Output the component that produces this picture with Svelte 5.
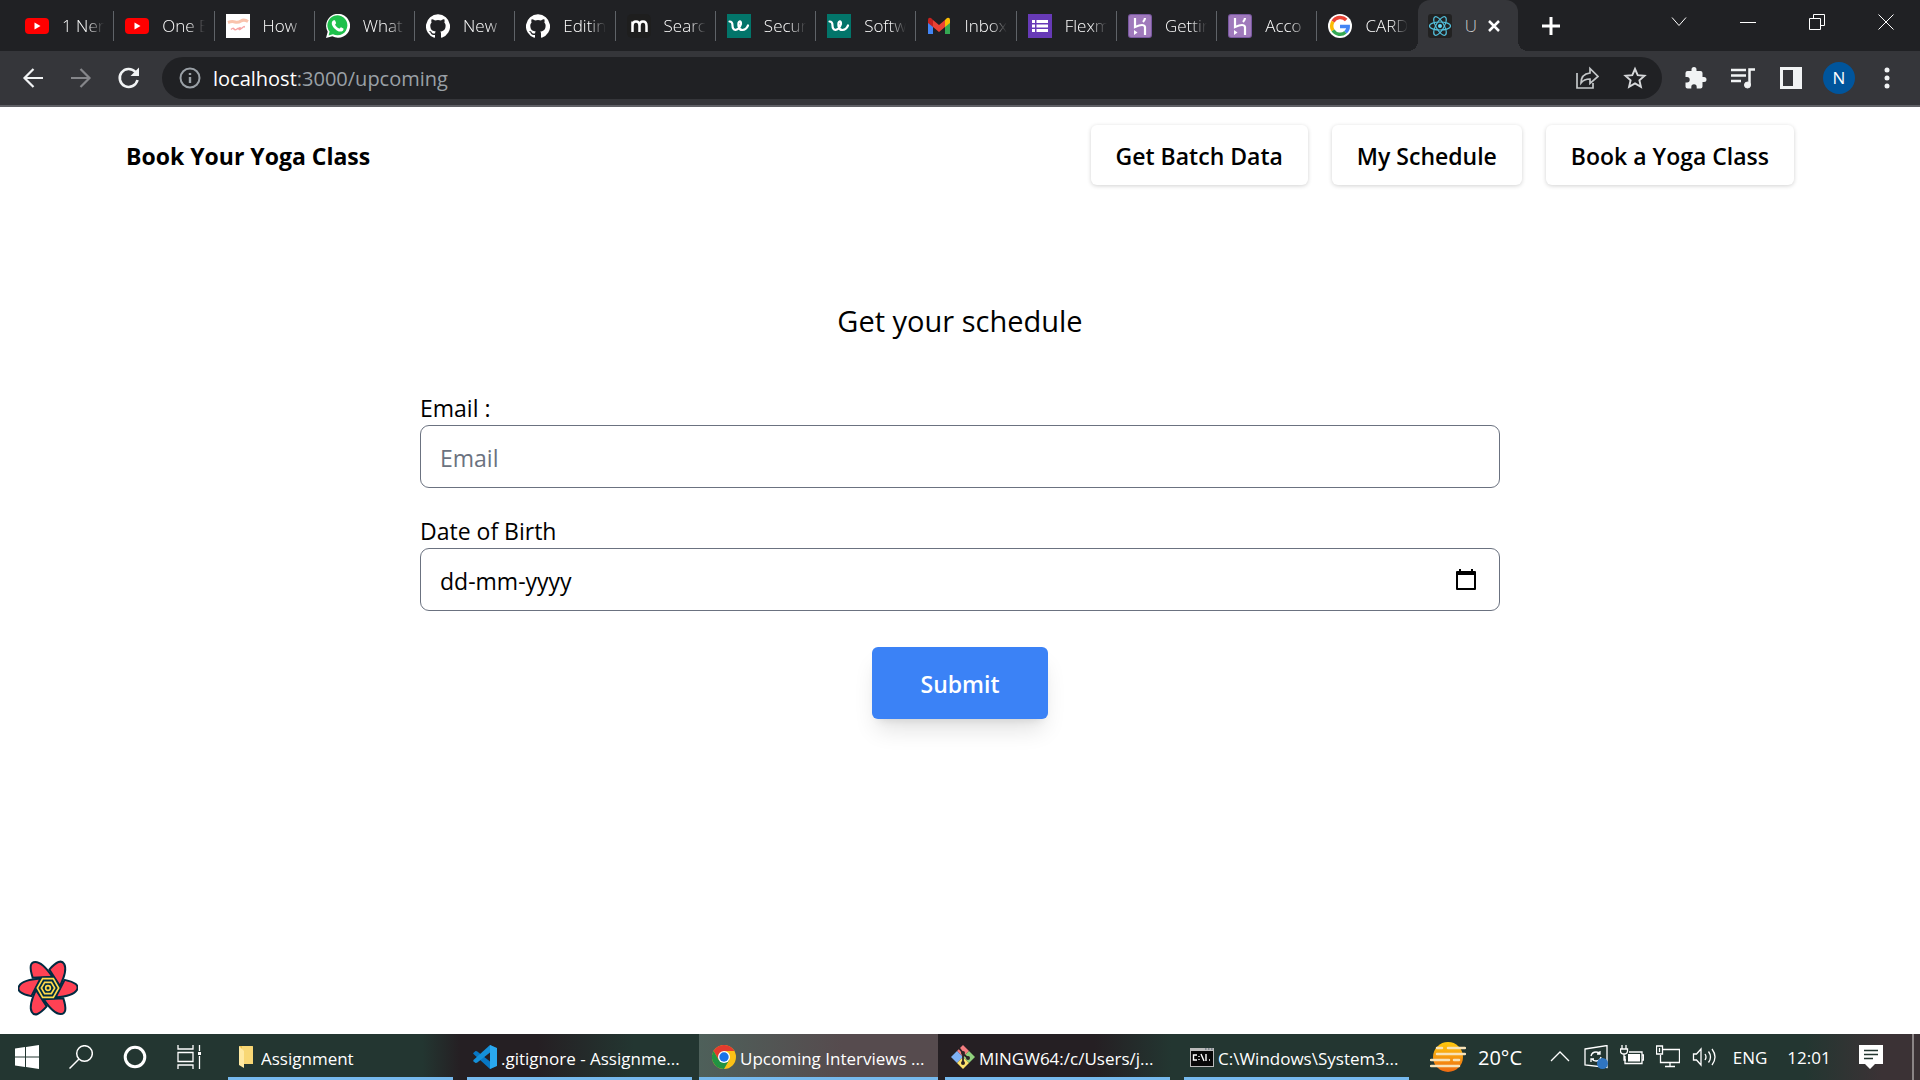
<script>
  const tabs = [
    { icon: 'youtube', title: '1 Ner' },
    { icon: 'youtube', title: 'One E' },
    { icon: 'school', title: 'How' },
    { icon: 'whatsapp', title: 'What' },
    { icon: 'github', title: 'New' },
    { icon: 'github', title: 'Editin' },
    { icon: 'm', title: 'Searc' },
    { icon: 'w', title: 'Secur' },
    { icon: 'w', title: 'Softw' },
    { icon: 'gmail', title: 'Inbox' },
    { icon: 'forms', title: 'Flexm' },
    { icon: 'heroku', title: 'Gettin' },
    { icon: 'heroku', title: 'Acco' },
    { icon: 'google', title: 'CARD' },
    { icon: 'react', title: 'U', active: true },
  ];
  const links = ['Get Batch Data', 'My Schedule', 'Book a Yoga Class'];
  const tasks = [
    { icon: 'folder', title: 'Assignment' },
    { icon: 'vscode', title: '.gitignore - Assignme...' },
    { icon: 'chrome', title: 'Upcoming Interviews ...', active: true },
    { icon: 'git', title: 'MINGW64:/c/Users/j...' },
    { icon: 'cmd', title: 'C:\\Windows\\System3...' },
  ];
  const petals = [0, 60, 120, 180, 240, 300];
  let email = $state('');
  let birth = $state('');
</script>

{#snippet icon(name)}
  <svg class="icon" viewBox="0 0 24 24" aria-hidden="true">
    {#if name === 'youtube'}
      <rect y="4" width="24" height="16" rx="4" fill="#f00" /><path d="M9.500 8.500v7l6-3.500z" fill="#fff" />
    {:else if name === 'school'}
      <path d="M0 0h24v24H0z" fill="#fff" />
      <path d="M2 8.500q4-1.500 7-.5t6-1 7 .5" fill="none" stroke="#f9c3ad" stroke-width="3" />
      <path d="M5 15.500q2-2 3-.5t3 0 2 0 3-1 2-.5M14 13v3" fill="none" stroke="#f7a3a3" stroke-width="1.500" />
    {:else if name === 'whatsapp'}
      <path d="M0 24l1.700-6.200A12 12 0 1 1 6.300 22.300z" fill="#fff" />
      <path d="M2.600 21.400l1-3.800A10 10 0 1 1 7 20.300z" fill="#1fc04c" />
      <path d="M8.200 6.200c.6 0 .8 0 1 .6l.9 2.200c.1.400-.9 1.300-1 1.700.9 1.800 2.300 3.100 4.300 3.900.5 0 1.100-1.500 1.600-1.400l2.400 1.200c.3.300 0 1.900-.8 2.500-1.500 1.100-3.300.9-5.800-.5-2-1.200-3.500-2.900-4.500-4.800-.9-2-.7-4 .8-5.200z" fill="#fff" />
    {:else if name === 'github'}
      <path fill="#fff" d="M12 .3a12 12 0 0 0-3.800 23.400c.6.100.8-.3.800-.6v-2.200c-3.300.7-4-1.400-4-1.400-.6-1.400-1.400-1.800-1.400-1.800-1-.7.1-.7.100-.7 1.200 0 1.900 1.200 1.900 1.200 1 1.800 2.800 1.300 3.500 1 0-.8.400-1.300.7-1.600-2.700-.3-5.500-1.300-5.500-6 0-1.200.5-2.300 1.300-3.100-.2-.4-.6-1.600 0-3.200 0 0 1-.3 3.400 1.200a11.500 11.500 0 0 1 6 0c2.300-1.500 3.300-1.200 3.300-1.200.6 1.600.2 2.800 0 3.200.9.800 1.300 1.900 1.300 3.200 0 4.600-2.800 5.600-5.500 5.900.5.400.9 1 .9 2.200v3.300c0 .3.100.7.800.6A12 12 0 0 0 12 .3" />
    {:else if name === 'm'}
      <rect width="24" height="24" rx="5" fill="#1e1e1e" />
      <path d="M5.500 18V7.500M5.500 12Q5.500 7.500 9 7.500T12.500 12V18M12.500 12Q12.500 7.500 16 7.500T19.500 12V18" fill="none" stroke="#fff" stroke-width="2.500" />
    {:else if name === 'w'}
      <path d="M0 0h24v24H0z" fill="#02756a" />
      <path d="M2.500 7.500q3 0 3 4t3 4.500q4-1 5.500-6 0-3-1.500-2.500t-1 4.500 4 4 5.500-4.500" fill="none" stroke="#fff" stroke-width="2.200" stroke-linecap="round" />
    {:else if name === 'gmail'}
      <path d="M1 7v13h5V11z" fill="#4285f4" /><path d="M23 7v13h-5V11z" fill="#34a853" />
      <path d="M18 6l2-2q3-1 3 2v3l-5 4z" fill="#fbbc04" /><path d="M1 6q0-3 3-2l2 2v7L1 9z" fill="#c5221f" /><path d="M6 6l6 5 6-5v7l-6 5-6-5z" fill="#ea4335" />
    {:else if name === 'forms'}
      <path d="M0 0h24v24H0z" fill="#673ab7" />
      <path d="M4 6h3v3H4zM8.500 6H20v3H8.500zM4 10.500h3v3H4zM8.500 10.500H20v3H8.500zM4 15h3v3H4zM8.500 15H20v3H8.500z" fill="#fff" />
    {:else if name === 'heroku'}
      <rect width="24" height="24" rx="3" fill="#79589f" /><rect x="1" y="1" width="22" height="22" rx="2" fill="#a07abc" />
      <path d="M7 4v9q9-4 10 0v8M17 4q0 2-2 4" fill="none" stroke="#fff" stroke-width="2.200" /><path d="M6 16l3.500 2.500L6 21z" fill="#fff" />
    {:else if name === 'google'}
      <circle cx="12" cy="12" r="12" fill="#fff" />
      <g fill="none" stroke-width="3.500"><path d="M18.200 6A8.300 8.300 0 0 0 5 7.600" stroke="#ea4335" /><path d="M5 7.600a8.300 8.300 0 0 0 0 8.800" stroke="#fbbc05" /><path d="M5 16.400a8.300 8.300 0 0 0 12.500 1.800" stroke="#34a853" /><path d="M17.500 18.200q2.800-2.500 2.700-5.700H12" stroke="#4285f4" /></g>
    {:else if name === 'react'}
      <rect width="24" height="24" rx="3" fill="#222" />
      <g fill="none" stroke="#53c1de" stroke-width="1.200" transform="rotate(0 12 12)"><ellipse cx="12" cy="12" rx="10.500" ry="4" /><ellipse cx="12" cy="12" rx="10.500" ry="4" transform="rotate(60 12 12)" /><ellipse cx="12" cy="12" rx="10.500" ry="4" transform="rotate(120 12 12)" /></g>
      <circle cx="12" cy="12" r="2" fill="#61dafb" />
    {:else if name === 'folder'}
      <path d="M5 1h13q1 0 1 1v17h-3V8H7z" fill="#f0c24b" /><path d="M8 1h10q1 0 1 1v17H8z" fill="#f8d775" /><path d="M5 1l5 5v17l-5-3z" fill="#ffe9a2" />
    {:else if name === 'vscode'}
      <path d="M17 0l6 3v18l-6 3L1 9.500 0 8.300 2.500 6 4 6.200 17 16.500z" fill="#0877c4" />
      <path d="M17 0l-16 14.500L0 16l2.500 2 1.500-.2L17 7.500z" fill="#1590d8" /><path d="M17 0l7 3v18l-7 3z" fill="#2aa8ef" />
    {:else if name === 'chrome'}
      <circle cx="12" cy="12" r="12" fill="#fbc116" />
      <path d="M1.600 6A12 12 0 0 1 22.400 6H12L6.800 15z" fill="#e33b2e" /><path d="M1.600 6A12 12 0 0 0 12 24l5.200-9H6.800z" fill="#229342" />
      <circle cx="12" cy="12" r="6" fill="#fff" /><circle cx="12" cy="12" r="4.700" fill="#1a73e8" />
    {:else if name === 'git'}
      <path d="M12 0l6 6-6 6-6-6z" fill="#f47d80" /><path d="M6 6l6 6-6 6-6-6z" fill="#7fb1f5" /><path d="M18 6l6 6-6 6-6-6z" fill="#90d07d" /><path d="M12 12l6 6-6 6-6-6z" fill="#fde26b" />
      <path d="M8 3l4 5v11M12 9l5 4" stroke="#2c2325" stroke-width="1.800" fill="none" /><circle cx="12" cy="8" r="2" fill="#2c2325" /><circle cx="17" cy="13" r="2" fill="#2c2325" /><circle cx="12" cy="18" r="2" fill="#2c2325" />
    {:else if name === 'cmd'}
      <path d="M0 3h24v19H0z" fill="#bbb" /><path d="M1 6h22v15H1z" fill="#080808" /><path d="M15 4h1.500M18 4h1.500M21 4h1.500" stroke="#456" />
      <path d="M7 10H3.500v5H7M9 11v1M9 14v1M11 9l3 7M16 9v7M19 15h1" fill="none" stroke="#fff" stroke-width="1.400" />
    {/if}
  </svg>
{/snippet}

<div class="screen">
  <div class="tabbar">
    <div class="tabs" role="tablist">
      {#each tabs as tab}
        <div class="tab" class:active={tab.active} role="tab" aria-selected={!!tab.active} tabindex="0">
          {@render icon(tab.icon)}
          <span class="title">{tab.title}</span>
          {#if tab.active}
            <button class="close" aria-label="Close tab"><svg viewBox="0 0 14 14" width="14" height="14"><path d="M2 2l10 10M12 2L2 12" stroke="#fff" stroke-width="2.500" /></svg></button>
          {/if}
        </div>
      {/each}
    </div>
    <button class="new" aria-label="New tab"><svg viewBox="0 0 18 18" width="18" height="18"><path d="M9 0v18M0 9h18" stroke="#fff" stroke-width="3" /></svg></button>
    <div class="controls">
      <button aria-label="Search tabs"><svg viewBox="0 0 16 16"><path d="M1 3.500l7 8 7-8" /></svg></button>
      <button aria-label="Minimize"><svg viewBox="0 0 16 16"><path d="M0 8.500h16" /></svg></button>
      <button aria-label="Restore"><svg viewBox="0 0 16 16"><path d="M.5 4.500h11v11H.5zM4.500 4V.5h11v11H12" /></svg></button>
      <button aria-label="Close"><svg viewBox="0 0 16 16"><path d="M.5.5l15 15M15.500.5l-15 15" /></svg></button>
    </div>
  </div>

  <div class="toolbar">
    <button class="tool" aria-label="Back"><svg viewBox="0 0 24 24" fill="none" stroke="#f1f3f4" stroke-width="2.200"><path d="M22 12H4M12.500 3L3.500 12l9 9" /></svg></button>
    <button class="tool" aria-label="Forward"><svg viewBox="0 0 24 24" fill="none" stroke="#85868a" stroke-width="2.200"><path d="M2 12h18M11.500 3l9 9-9 9" /></svg></button>
    <button class="tool" aria-label="Reload"><svg viewBox="0 0 24 24" fill="none" stroke="#f1f3f4" stroke-width="2.600"><path d="M20.500 14A9 9 0 1 1 18.500 6" /><path d="M22 1.500V10h-8.500z" fill="#f1f3f4" stroke="none" /></svg></button>
    <div class="omnibox">
      <svg class="info" viewBox="0 0 22 22" fill="none" stroke="#9aa0a6" stroke-width="2"><circle cx="11" cy="11" r="9.500" /><path d="M11 10v6M11 6v2" stroke-width="2.400" /></svg>
      <div class="url">localhost<span>:3000/upcoming</span></div>
      <button class="tool" aria-label="Share"><svg viewBox="0 0 24 24" fill="none" stroke="#c4c7c9" stroke-width="1.700"><path d="M2 7v15h16v-5" /><path d="M6 17Q6 8 15 7V2.500l8 8-8 7V13q-6 0-9 4z" /></svg></button>
      <button class="tool" aria-label="Bookmark"><svg viewBox="0 0 24 24" fill="none" stroke="#d6d8da" stroke-width="1.900"><path d="M12 3l2.700 6.200 6.800.6-5.100 4.500 1.500 6.600-5.900-3.500-5.900 3.500 1.500-6.600-5.100-4.500 6.800-.6z" /></svg></button>
    </div>
    <button class="tool" aria-label="Extensions"><svg viewBox="0 0 24 24" fill="#f1f3f4"><path d="M21 11h-1.500V7q0-2-2-2h-4V3.500a2.500 2.500 0 0 0-5 0V5h-4q-2 0-2 2v4H4a2.700 2.700 0 0 1 0 5.400H2.500V20.500q0 2 2 2h3.800V21a2.700 2.700 0 0 1 5.400 0v1.500h3.800q2 0 2-2v-4.500H21a2.500 2.500 0 0 0 0-5z" /></svg></button>
    <button class="tool" aria-label="Media"><svg viewBox="0 0 24 24" fill="none" stroke="#f1f3f4" stroke-width="2.500"><path d="M0 4h15M0 9.500h15M0 15h10M18.500 19V3.500H24" /><circle cx="16.500" cy="19" r="3" fill="#f1f3f4" stroke-width="1" /></svg></button>
    <button class="tool" aria-label="Side panel"><svg viewBox="0 0 24 24" fill="#f1f3f4"><path fill-rule="evenodd" d="M1 1h22v22H1zM4 4v16h10V4z" /></svg></button>
    <button class="tool" aria-label="Profile"><span class="avatar">N</span></button>
    <button class="tool" aria-label="Menu"><svg viewBox="0 0 24 24" fill="#f1f3f4"><circle cx="12" cy="4" r="2.500" /><circle cx="12" cy="12" r="2.500" /><circle cx="12" cy="20" r="2.500" /></svg></button>
  </div>

  <div class="page">
    <header>
      <strong>Book Your Yoga Class</strong>
      <nav>
        {#each links as link}<a href="#{link.toLowerCase().replaceAll(' ', '-')}">{link}</a>{/each}
      </nav>
    </header>
    <main>
      <h1>Get your schedule</h1>
      <form onsubmit={(e) => e.preventDefault()}>
        <label for="email">Email :</label>
        <div class="field"><input id="email" type="email" placeholder="Email" bind:value={email} /></div>
        <label for="birth">Date of Birth</label>
        <div class="field">
          <input id="birth" class="date" type="text" placeholder="dd-mm-yyyy" bind:value={birth} />
          <button class="calendar" type="button" aria-label="Open calendar"><svg viewBox="0 0 20 22" width="20" height="22"><path fill-rule="evenodd" d="M3 0h2v2h10V0h2v2h2q1 0 1 1v17q0 1-1 1H1q-1 0-1-1V3q0-1 1-1h2zM2 6v13h16V6z" /></svg></button>
        </div>
        <button class="submit">Submit</button>
      </form>
    </main>
    <button class="devtools" aria-label="Open query devtools">
      <svg viewBox="-90 -90 180 180" width="60" height="60">
        <g fill="#ff4154" stroke="#002b41" stroke-width="6" stroke-linejoin="round">
          {#each petals as angle}<path transform="rotate({angle})" d="M-46-31C-56-62-54-78-38-78C-20-78-2-56 13-34z" />{/each}
        </g>
        <path d="M-19-34h38L39 0 19 34h-38L-39 0z" fill="#002b41" />
        <g fill="none" stroke="#ffd94c" stroke-width="5"><path d="M-16-28h32L32 0 16 28h-32L-32 0z" /><path d="M-10-17h20L20 0 10 17h-20L-20 0z" /></g>
        <circle r="7" fill="none" stroke="#ffd94c" stroke-width="5" />
      </svg>
    </button>
  </div>

  <footer class="taskbar">
    <button class="start" aria-label="Start"><svg viewBox="0 0 24 24" fill="#fff"><path d="M0 3.500l10-1.400v9.400H0zM11 2l13-2v11.500H11zM0 12.500h10v9.400L0 20.500zM11 12.500h13V24l-13-2z" /></svg></button>
    <button class="start" aria-label="Search"><svg viewBox="0 0 24 24" fill="none" stroke="#fff" stroke-width="1.500"><circle cx="15.500" cy="8.500" r="7.800" /><path d="M10 14L.5 23.500" /></svg></button>
    <button class="start" aria-label="Cortana"><svg viewBox="0 0 24 24" fill="none" stroke="#fff" stroke-width="3"><circle cx="12" cy="12" r="9.800" /></svg></button>
    <button class="start" aria-label="Task view"><svg viewBox="0 0 24 24" fill="none" stroke="#fff" stroke-width="1.300"><path d="M1 0v4h15V0M1 7.500h15v9H1zM1 24v-4h15v4M22.500 0v6M22.500 11v13" /><path d="M21 7h3v3h-3z" fill="#fff" stroke="none" /></svg></button>
    <div class="tasks">
      {#each tasks as task}
        <button class="task" class:active={task.active}>{@render icon(task.icon)}<span>{task.title}</span></button>
      {/each}
    </div>
    <div class="weather">
      <svg viewBox="0 0 36 30" width="36" height="30"><defs><linearGradient id="sun" x1="0" y1="0" x2="0" y2="1"><stop stop-color="#ffc90e" /><stop offset="1" stop-color="#ee6a12" /></linearGradient></defs><circle cx="18" cy="15" r="15" fill="url(#sun)" /><path d="M7 6h5M18 6h17M7 12h28M1 18h18M24 18h5M1 24h28" stroke="#f8e3b8" stroke-width="2.500" stroke-linecap="round" /></svg>
      20°C
    </div>
    <div class="tray">
      <button aria-label="Hidden icons"><svg viewBox="0 0 24 24"><path d="M3 16l9-9 9 9" /></svg></button>
      <button aria-label="Updates"><svg viewBox="0 0 24 24"><path d="M1 4l22-3.500v22L1 20z" /><path d="M7 11q1-4 5-4 3 0 4 2M16 6v3h-3M17 12q-1 4-5 4-3 0-4-2M7 17v-3h3" /><circle cx="18.500" cy="18.500" r="5.500" fill="#2f75c0" stroke="none" /></svg></button>
      <button aria-label="Battery"><svg viewBox="0 0 24 24"><path d="M5 11v7.500h17V7H9M22 10h1.500v5H22M2 0v4M6 0v4M.5 4h7v2q0 3-3.500 3T.5 6zM4 9v6h2" /><path d="M8 9h12v7.500H8z" fill="#fff" stroke="none" /></svg></button>
      <button aria-label="Network"><svg viewBox="0 0 24 24"><path d="M7 4.500h16.500v13H4.500V10M.5 1h6v8h-6zM3.500 3v4M14 17.500v4M9 21.500h10" /></svg></button>
      <button aria-label="Volume"><svg viewBox="0 0 24 24"><path d="M1.500 9h3L9 4v16l-4.500-5h-3zM13 9q2 3 0 6M16.500 6.500q4 5.500 0 11M20 4q6 8 0 16" /></svg></button>
    </div>
    <button class="lang">ENG</button>
    <button class="clock">12:01</button>
    <button class="clock" aria-label="Notifications"><svg viewBox="0 0 24 24"><path d="M0 0h24v19h-8l-5 5-5-5H0z" fill="#fff" /><path d="M5 5.500h14M5 9.500h14M5 13.500h9" stroke="#22352f" stroke-width="1.300" /></svg></button>
    <div class="desktop"></div>
  </footer>
</div>

<style>
  :global(body) { margin: 0; }
  .screen { display: flex; flex-direction: column; min-height: 100vh; font-family: "Open Sans", "Noto Sans", sans-serif; background: #fff; color: #000; }
  button { border: 0; padding: 0; margin: 0; background: none; color: inherit; font: inherit; display: flex; align-items: center; justify-content: center; }
  svg { display: block; flex: none; }
  .icon { width: 24px; height: 24px; }

  .tabbar { display: flex; height: 51px; padding-left: 14px; background: #202124; color: #fff; }
  .tabs { display: grid; grid-template-columns: repeat(15, minmax(0, 1fr)); flex: 0 1 1504px; min-width: 0; }
  .tab { position: relative; display: flex; align-items: center; gap: 13px; padding: 0 10px 0 11px; font-size: 17px; font-weight: 300; }
  .tab:not(.active)::after { content: ""; position: absolute; right: 0; top: 11px; width: 1px; height: 30px; background: #5f6368; }
  .tab:nth-last-child(2)::after { display: none; }
  .title { flex: 1; min-width: 0; overflow: hidden; white-space: nowrap; mask-image: linear-gradient(90deg, #000 60%, transparent); }
  .tab.active { background: #35363a; border-radius: 12px 12px 0 0; padding: 0 17px 0 10px; }
  .tab.active::before, .tab.active::after { content: ""; position: absolute; bottom: 0; width: 10px; height: 10px; background: radial-gradient(circle at 0 0, transparent 10px, #35363a 10px); }
  .tab.active::before { left: -10px; }
  .tab.active::after { right: -10px; transform: scaleX(-1); }
  .tab.active .title { mask-image: none; color: #c8c9cb; }
  .close { margin-left: -8px; }
  .new { width: 66px; }
  .controls { display: flex; margin-left: auto; height: 43px; }
  .controls button { width: 69px; }
  .controls svg { width: 16px; height: 16px; fill: none; stroke: #fff; stroke-width: 1; }

  .toolbar { display: flex; align-items: center; height: 54px; padding: 0 9px; background: #35363a; border-bottom: 2px solid #5f6065; color: #fff; }
  .tool { flex: none; width: 48px; height: 42px; }
  .tool svg { width: 24px; height: 24px; }
  .omnibox { display: flex; align-items: center; flex: 1; min-width: 0; height: 42px; margin: 0 9px; padding: 0 3px 0 17px; border-radius: 21px; background: #202124; }
  .info { width: 22px; height: 22px; }
  .url { flex: 1; margin-left: 12px; padding-top: 2px; font-size: 20px; line-height: 28px; }
  .url span { color: #9aa0a6; }
  .avatar { width: 32px; height: 32px; border-radius: 50%; background: #00559c; font-size: 17px; line-height: 32px; text-align: center; }

  .page { position: relative; flex: 1; }
  header { display: flex; align-items: center; justify-content: space-between; padding: 18px 126px 0; font-size: 23px; line-height: 36px; }
  strong { padding-top: 2px; font-weight: 700; }
  nav { display: flex; gap: 24px; }
  a { padding: 13px 25px 11px; border-radius: 6px; color: #000; text-decoration: none; font-weight: 600; box-shadow: 0 1px 4px rgba(0, 0, 0, 0.18); }
  main { padding: 114px 24px 24px; }
  h1 { margin: 0 0 46px; text-align: center; font-size: 29px; line-height: 44px; font-weight: 500; }
  form { max-width: 1080px; margin: 0 auto; }
  label { display: block; padding-top: 2px; font-size: 23px; line-height: 34px; }
  .field { display: flex; align-items: center; box-sizing: border-box; height: 63px; margin-bottom: 24px; padding: 0 23px 0 19px; border: 1px solid #6b7280; border-radius: 9px; }
  input { flex: 1; min-width: 0; padding: 2px 0 0; border: 0; outline: 0; background: none; font: inherit; font-size: 23px; color: #000; }
  input::placeholder { color: #6b7280; opacity: 1; }
  .date::placeholder { color: #000; }
  .submit { height: 72px; width: 176px; margin: 36px auto 0; padding-top: 2px; border-radius: 6px; background: #3b82f6; color: #fff; font-size: 23px; font-weight: 600; box-shadow: 0 15px 23px -5px rgba(0, 0, 0, 0.12), 0 6px 9px -6px rgba(0, 0, 0, 0.12); }
  .devtools { position: absolute; left: 18px; bottom: 16px; }

  .taskbar { display: flex; height: 46px; color: #fff; font-size: 17px; background: linear-gradient(90deg, #233631 0, #233631 22%, #251f23 24%, #251f23 28%, #233631 33%, #233631 44%, #251f23 49%, #251f23 57%, #233631 61%, #233631 94%, #3b3235 98%); }
  .start { flex: none; width: 54px; }
  .start svg { width: 24px; height: 24px; }
  .tasks { display: flex; flex: 0 1 1195px; min-width: 0; margin-left: 5px; }
  .task { position: relative; flex: 1 1 0; min-width: 0; justify-content: flex-start; gap: 4px; padding: 0 12px 0 13px; }
  .task span { white-space: nowrap; overflow: hidden; padding-top: 2px; }
  .task:first-child { gap: 3px; }
  .task::after { content: ""; position: absolute; left: 7px; right: 7px; bottom: 0; height: 3px; background: #76b9ed; }
  .task.active { background: linear-gradient(90deg, #4e605a, #564b4e 60%); }
  .task.active::after { left: 0; right: 0; }
  .weather { display: flex; flex: none; align-items: center; gap: 12px; width: 112px; padding-left: 14px; font-size: 20px; }
  .tray { display: flex; }
  .tray button { width: 36px; }
  .tray svg, .clock svg { width: 24px; height: 24px; }
  .tray svg { fill: none; stroke: #fff; stroke-width: 1.300; }
  .lang { width: 56px; }
  .clock { width: 62px; }
  .desktop { width: 6px; margin-left: auto; border-left: 2px solid #8b8586; }
</style>
